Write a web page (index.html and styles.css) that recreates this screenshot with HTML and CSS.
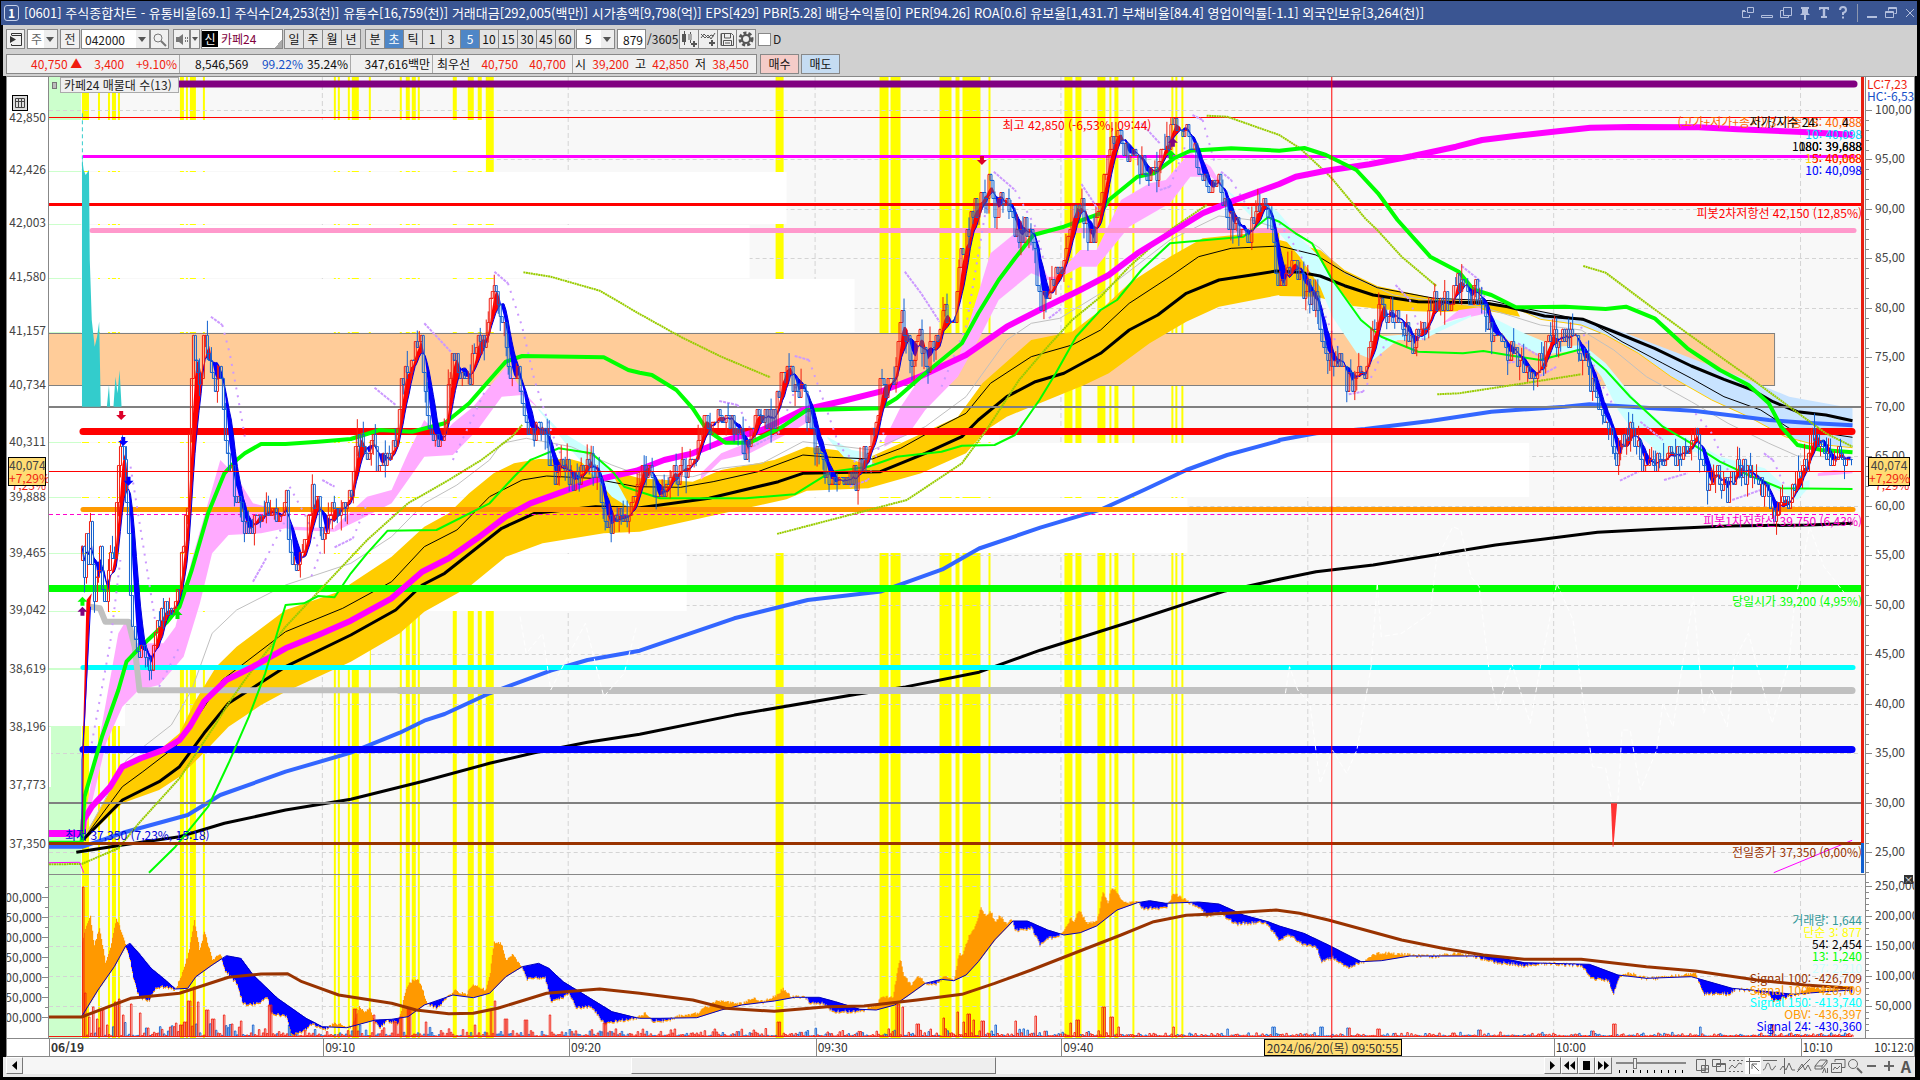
FILE: index.html
```html
<!DOCTYPE html>
<html lang="ko">
<head>
<meta charset="utf-8">
<title>주식종합차트</title>
<link rel="stylesheet" href="styles.css">
</head>
<body>
<div class="window">
  <header class="titlebar">
    <span class="titlebar-no">1</span>
    <h1>[0601] 주식종합차트 - 유통비율[69.1] 주식수[24,253(천)] 유통수[16,759(천)] 거래대금[292,005(백만)] 시가총액[9,798(억)] EPS[429] PBR[5.28] 배당수익률[0] PER[94.26] ROA[0.6] 유보율[1,431.7] 부채비율[84.4] 영업이익률[-1.1] 외국인보유[3,264(천)]</h1>
    <nav class="title-icons">
      <button aria-label="분리"><svg width="14" height="14"><path d="M6.500 1.500h6v5h-6zM4 4.500H1.500v7h7V9M1 5.500h4" /></svg></button>
      <button aria-label="숨기기"><svg width="14" height="14"><path d="M1.500 9.500h11v2h-11z"/></svg></button>
      <button aria-label="복사"><svg width="14" height="14"><path d="M4.500 1.500h8v8h-8zM4 4.500H1.500v7h8V10"/></svg></button>
      <button aria-label="고정"><svg width="14" height="14"><path class="fill" d="M3 1h8v2H10v4l2 2H2l2-2V3H3zM6 9h2v5H6z"/></svg></button>
      <button aria-label="글꼴"><svg width="14" height="14"><path class="fill" d="M2 1h10v3h-1.500V3H8.200v7H10v2H4v-2h1.800V3H3.500v1H2z"/></svg></button>
      <button aria-label="도움말"><svg width="14" height="14"><path class="bold" d="M4 4q0-3 3-3t3 3q0 2-3 3v2M7 10.500v2"/></svg></button>
      <i class="title-sep"></i>
      <button aria-label="최소화"><svg width="14" height="14"><path class="bold" d="M2 11h10"/></svg></button>
      <button aria-label="이전 크기"><svg width="14" height="14"><path d="M4.500 1.500h8v6h-2M4.500 2.500h8M4.500 1.500v3M1.500 5.500h8v6h-8zM1.500 6.500h8"/></svg></button>
      <button aria-label="닫기"><svg width="14" height="14"><path d="M3 3l8 8M11 3l-8 8"/></svg></button>
    </nav>
  </header>

  <form class="toolbar">
    <button type="button" class="tool" aria-label="목록"><svg width="15" height="15"><path d="M3.500 3V1.500h10v12h-10V12M3.500 3.500h10"/><path class="fill" d="M2 4l6 3.500L2 11z"/></svg></button>
    <span class="combo market"><select aria-label="시장"><option>주</option></select></span>
    <button type="button" class="tool prev">전</button>
    <span class="combo code"><input aria-label="종목코드" value="042000"></span>
    <button type="button" class="tool search" aria-label="검색"><svg width="15" height="15"><circle cx="6" cy="6" r="4"/><path class="bold" d="M9 9l5 5"/></svg></button>
    <button type="button" class="tool sound" aria-label="소리"><svg width="14" height="13"><path class="fill" d="M1 4h3l4-3v11L4 9H1z"/><path d="M10.500 4v2M10.500 7v2M12.500 4v2M12.500 7v2"/></svg></button>
    <button type="button" class="tool drop" aria-label="소리 옵션"></button>
    <output class="stock"><b>신</b>카페24</output>
    <span class="group period"><button type="button">일</button><button type="button">주</button><button type="button">월</button><button type="button">년</button></span>
    <span class="group unit"><button type="button">분</button><button type="button" class="on">초</button><button type="button">틱</button></span>
    <span class="group count"><button type="button">1</button><button type="button">3</button><button type="button" class="on">5</button><button type="button">10</button><button type="button">15</button><button type="button">30</button><button type="button">45</button><button type="button">60</button></span>
    <span class="combo interval"><select aria-label="주기"><option>5</option></select></span>
    <input class="bars" aria-label="봉 개수" value="879">
    <span class="total">/3605</span>
    <span class="group icons">
      <button type="button" aria-label="봉 추가"><svg width="17" height="17"><path class="fill" d="M1 3h4v8H1z"/><path d="M3.500 0v14M9.500 1v11"/><path class="soft" d="M7 3h4v6H7z"/><path class="bold" d="M13 10v6M10 13h6"/></svg></button>
      <button type="button" aria-label="지표 추가"><svg width="17" height="17"><path d="M1 7l3-4 4 4 3-3 3 1M1 3l4 4 3-3 3 4 4-6"/><path class="bold" d="M12 9v6M9 12h6"/></svg></button>
      <button type="button" aria-label="저장"><svg width="17" height="17"><path d="M2.500 2.500h10l2 2v10h-12zM5.500 3v4h6V3M4.500 14V9.500h8V14M6 12h5M2 2.500v12"/></svg></button>
      <button type="button" aria-label="설정"><svg width="17" height="17"><circle class="gear" cx="8" cy="8" r="6"/><circle class="bold" cx="8" cy="8" r="4"/></svg></button>
    </span>
    <label class="check"><input type="checkbox">D</label>
  </form>

  <section class="quote">
    <div class="quote-box">
      <span class="cell c1 up"><b>40,750 ▲</b><b>3,400</b><b>+9.10%</b></span>
      <span class="cell c2"><b class="qty">8,546,569</b><b class="down">99.22%</b><b>35.24%</b></span>
      <span class="cell c3">347,616백만</span>
      <span class="cell c4">최우선<b class="up">40,750</b><b class="up">40,700</b></span>
      <span class="cell c5">시<b class="up">39,200</b>고<b class="up">42,850</b>저<b class="up">38,450</b></span>
    </div>
    <button class="buy">매수</button>
    <button class="sell">매도</button>
  </section>

  <main class="chart">
    <div class="axis axis-left" id="left">
      <button class="axis-grid" aria-label="표"><svg width="14" height="14"><path d="M2.500 2.500h9v9h-9zM2.500 5.500h9M5.500 2.500v9M8.500 2.500v9"/></svg></button>
    </div>
    <div class="plot" id="plot">
      <svg id="canvas" viewBox="49 77 1818 961" preserveAspectRatio="none"></svg>
      <i class="legend-mark"></i>
      <span class="legend">카페24 매물대 수(13)</span>
    </div>
    <div class="axis axis-right" id="right">
      <span class="lc">LC:7,23</span>
      <span class="hc">HC:-6,53</span>
      <button class="axis-close" aria-label="닫기">×</button>
    </div>
    <div class="corner"></div>
    <div class="times" id="times"><b>06/19</b></div>
    <div class="corner clock">10:12:0</div>
  </main>

  <footer class="bottom">
    <div class="scroll">
      <button class="scroll-left" aria-label="왼쪽"><svg width="7" height="9"><path d="M6 0v9L1 4.500z"/></svg></button>
      <div class="scroll-track"><div class="scroll-thumb"></div></div>
    </div>
    <div class="play">
      <button aria-label="재생"><svg width="13" height="11"><path d="M4 1v9l5-4.500z"/></svg></button>
      <button aria-label="뒤로"><svg width="13" height="11"><path d="M6 1v9L1 5.500zM12 1v9L7 5.500z"/></svg></button>
      <button aria-label="정지"><svg width="13" height="11"><path d="M3 1h7v9H3z"/></svg></button>
      <button aria-label="앞으로"><svg width="13" height="11"><path d="M1 1v9l5-4.500zM7 1v9l5-4.500z"/></svg></button>
    </div>
    <label class="speed"><input type="range" min="0" max="100" value="25" aria-label="속도"></label>
    <div class="draw">
      <button aria-label="창 추가"><svg width="16" height="16"><path d="M2.500 1.500h9v11h-9zM7.500 7.500h7v7h-7zM11 7v8M7 11h8"/></svg></button>
      <button aria-label="창 겹침"><svg width="16" height="16"><path d="M1.500 1.500h8v7h-8zM5.500 5.500h9v8h-9zM5 6.500h10"/></svg></button>
      <button aria-label="영역"><svg width="16" height="16"><path d="M1 11l3-4 3 3 4-5 3 1"/><path class="dots" d="M1 2.500h14M1 13.500h14"/></svg></button>
      <button aria-label="십자선" class="on"><svg width="16" height="16"><path d="M1 3.500h14M4.500 0v16M7 6v5M7 6h5M7 6l7 7"/></svg></button>
      <button aria-label="수평선"><svg width="16" height="16"><path d="M1 2.500h14M1 12c3 0 3-7 5-7s2 7 4 7 2-4 4-4"/></svg></button>
      <button aria-label="수직선"><svg width="16" height="16"><path d="M5.500 0v16M1 12l3-4 3 4 3-7 3 7h3"/></svg></button>
      <button aria-label="추세선"><svg width="16" height="16"><path d="M1 14L14 1M2 12l4-6 3 6 3-5 3 6"/></svg></button>
      <button aria-label="모두 지우기"><svg width="16" height="16"><path d="M2 8l5-6h7v3l-5 6H2zM2 8h7v3M9 8l5-6M9.500 15l2-5 1.500 5M14.500 10v5"/></svg></button>
      <button aria-label="차트 복사"><svg width="16" height="16"><path d="M5 4V1.500h10v8h-3M1.500 5.500h10v9h-10zM3 12l2-3 2 2 3-3"/></svg></button>
      <button aria-label="확대 보기"><svg width="16" height="16"><circle cx="6" cy="6" r="4.500"/><path class="bold" d="M10 10l5 5"/></svg></button>
      <button aria-label="축소"><svg width="16" height="16"><path class="bold" d="M3 8h9"/></svg></button>
      <button aria-label="확대"><svg width="16" height="16"><path class="bold" d="M3 8h10M8 3v10"/></svg></button>
      <button aria-label="자동" class="auto">A</button>
    </div>
  </footer>
</div>
<script src="chart.js"></script>
</body>
</html>
```
FILE: styles.css
```css
* { box-sizing: border-box; }
body {
  margin: 0;
  background: #000;
  font: 12px/16px "Noto Sans CJK KR", sans-serif;
  color: #222;
}
button, input, select { font: inherit; color: inherit; margin: 0; padding: 0; border: 0; background: none; border-radius: 0; }
b { font-weight: normal; }
svg { display: block; fill: none; stroke: currentColor; }
svg .fill { fill: currentColor; stroke: none; }
svg .soft { fill: #aaa; stroke: none; }
svg .bold { stroke-width: 2; }
svg .gear { stroke-width: 3; stroke-dasharray: 3 2; }
.window { display: flex; flex-direction: column; min-height: 100vh; padding: 1px 3px 3px 1px; }

.titlebar { display: flex; align-items: center; height: 24px; padding: 0 0 0 3px; background: #3a5592; color: #fff; }
.titlebar-no { width: 15px; height: 16px; margin-right: 5px; border: 1px solid #c8d2ea; border-radius: 3px; text-align: center; line-height: 14px; font-weight: bold; }
.titlebar h1 { flex: 1; margin: 0; font-size: 13px; line-height: 22px; font-weight: normal; white-space: nowrap; }
.title-icons { display: flex; align-items: center; gap: 5px; color: #b4c0de; }
.title-sep { width: 1px; height: 18px; margin: 0 2px; background: #8d97ae; }

.toolbar { display: flex; align-items: center; height: 27px; margin-left: 2px; padding: 1px 3px 0; background: #d0d0d0; white-space: nowrap; }
.tool, .group button { display: flex; align-items: center; justify-content: center; height: 20px; border: 1px solid #888; background: #f0f0f0; color: #333; }
.tool { width: 19px; flex: none; }
.prev { width: 20px; }
.search { color: #777; }
.sound { width: 17px; margin-left: 4px; color: #777; }
.drop { width: 10px; }
.drop::after, .combo::after { content: ""; border: 4px solid transparent; border-top: 5px solid #555; border-bottom: 0; }
.drop::after { border-width: 4px 3px 0; }
.combo { display: flex; align-items: center; height: 20px; flex: none; padding-right: 3px; border: 1px solid #888; background: linear-gradient(#eee, #eee) right / 13px 100% no-repeat #fff; }
.combo select, .combo input { flex: 1; min-width: 0; height: 18px; padding-left: 3px; appearance: none; }
.market { width: 31px; margin: 0 2px; color: #666; }
.code { width: 69px; margin-left: 1px; }
.stock { display: flex; align-items: center; width: 82px; height: 20px; margin: 0 1px; border: 1px solid #888; background: linear-gradient(135deg, transparent 50%, #aaa 50%) right bottom / 8px 8px no-repeat #fff; color: #80003c; }
.stock b { width: 16px; margin-right: 3px; background: #000; color: #fff; text-align: center; }
.group { display: flex; flex: none; }
.group button { width: 20px; margin-right: -1px; background: #e4e4e4; color: #111; }
.group .on { background: #4f86c6; color: #fff; }
.unit { margin-left: 5px; }
.interval { width: 39px; margin-left: 2px; color: #111; }
.interval select { padding-left: 8px; }
.bars { width: 29px; height: 20px; margin-left: 2px; padding-right: 2px; border: 1px solid #888; background: #fff; text-align: right; color: #111; }
.total { width: 33px; padding-left: 1px; }
.icons button { color: #555; background: #eee; }
.check { display: flex; align-items: center; gap: 2px; margin-left: 3px; }
.check input { width: 13px; height: 13px; appearance: none; border: 1px solid #888; background: #fff; }

.quote { display: flex; align-items: center; gap: 2px; height: 24px; margin-left: 2px; padding: 0 3px 1px; background: #d0d0d0; color: #111; white-space: nowrap; }
.quote-box { display: flex; width: 751px; height: 20px; border: 1px solid #888; background: #f0f0f0; }
.cell { display: flex; align-items: center; justify-content: space-between; padding: 0 2px 0 4px; border-left: 1px solid #aaa; }
.c1 { width: 172px; padding-left: 24px; border: 0; }
.c2 { width: 171px; padding-left: 15px; gap: 4px; }
.qty { margin-right: auto; }
.c3 { width: 82px; justify-content: flex-end; }
.c4 { width: 140px; padding-right: 6px; }
.c5 { flex: 1; padding: 0 7px 0 2px; }
.up { color: #f01e10; }
.down { color: #1450c8; }
.quote button { width: 39px; height: 20px; border: 1px solid #888; }
.quote .buy { margin-left: 1px; background: #f5ccc8; }
.quote .sell { background: #c5dcf2; }

.chart { flex: 1; display: grid; grid-template-columns: 43px minmax(0, 1fr) 48px; grid-template-rows: minmax(0, 1fr) 18px; margin: 0 2px 0 5px; border: 1px solid #888; border-width: 1px 1px 1px 0; background: #fff; }
.axis { position: relative; overflow: hidden; color: #444; }
.axis-left { border-right: 1px solid #888; border-left: 1px solid #888; }
.axis span, .plot span, .times span, .times b { position: absolute; white-space: nowrap; line-height: 16px; }
.axis .label { transform: translateY(-50%); }
.axis-left .label { right: 2px; }
.axis-left .lower { right: 6px; }
.axis-right .label { left: 9px; }
.axis .tick { height: 1px; width: 6px; background: #888; }
.axis-right .tick { left: 0; }
.axis-left .tick { right: 0; }
.axis .minor { width: 3px; }
.axis .lc { top: -1px; left: 1px; color: #f01e10; }
.axis .hc { top: 11px; left: 1px; color: #1450c8; }
.axis-close { position: absolute; top: 83%; right: 1px; width: 9px; height: 9px; background: #333; color: #fff; font-size: 9px; line-height: 9px; }
.axis-grid { position: absolute; top: 18px; left: 5px; border: 1px solid #000; background: #ddd; }
.axis .price-tag { z-index: 1; width: 38px; height: 29px; border: 1px solid #000; background: #ffdc73; text-align: center; line-height: 13px; }
.axis-left .price-tag { left: 1px; }
.axis-right .price-tag { left: 2px; width: 42px; }
.price-tag em { display: block; font-style: normal; color: #f01e10; }
.plot { position: relative; overflow: hidden; background: #f8f8f8; }
.plot svg { position: absolute; width: 100%; height: 100%; stroke: none; }
.plot .mark { transform: translateY(-50%); }
.plot .edge { right: 4px; }
.plot .legend { top: 0; left: 11px; width: 119px; height: 16px; padding: 0 3px; border: 1px solid #aaa; background: #f0f0f0; line-height: 14px; }
.legend-mark { position: absolute; top: 5px; left: 3px; width: 5px; height: 7px; border: 1px solid #777; background: #bbb; }
.corner, .times { border-top: 1px solid #888; }
.corner { border-left: 1px solid #888; }
.clock { padding-left: 8px; border-left: 0; color: #333; white-space: nowrap; }
.times { position: relative; border-left: 1px solid #888; color: #333; }
.times b { left: 1px; font-weight: bold; }
.times span { height: 17px; padding-left: 1px; border-left: 1px solid #888; }
.times .cursor-time { padding: 0 2px; border: 1px solid #000; background: #ffdc73; }

.bottom { display: flex; height: 20px; margin: 0 2px 0 2px; padding: 0 1px 3px 3px; background: #e8e8e8; }
.bottom button { display: flex; align-items: center; justify-content: center; height: 17px; }
.scroll { display: flex; flex: 1; }
.scroll-left, .play button { width: 17px; border: 1px solid #777; border-top-color: #fff; border-left-color: #fff; background: #eee; }
.bottom .scroll-left svg, .play svg { fill: #000; stroke: none; }
.scroll-track { flex: 1; background: #f6f6f6; }
.scroll-thumb { width: 24%; height: 17px; margin-left: 40%; border: 1px solid #777; border-top-color: #fff; border-left-color: #fff; background: #eee; }
.play { display: flex; }
.speed { width: 78px; padding: 0 4px; background: repeating-linear-gradient(90deg, #000 0 1px, transparent 1px 7px) 7px 13px / 66px 3px no-repeat; }
.speed input { display: block; width: 70px; height: 12px; appearance: none; background: linear-gradient(#888, #888) center / 100% 2px no-repeat; }
.speed input::-webkit-slider-thumb { appearance: none; width: 4px; height: 11px; border: 1px solid #777; background: #eee; }
.draw { display: flex; gap: 1px; padding-left: 4px; color: #666; }
.draw button { width: 16px; }
.draw .on { background: #fff; }
.draw .dots { stroke-dasharray: 2 2; }
.draw .auto { font-size: 16px; font-weight: bold; color: #555; }
```
FILE: chart.js
```js
const svg = document.getElementById('canvas');
const NS = 'http://www.w3.org/2000/svg';

// Every series is stored in sections; a section has an origin and a scale of its own.
const sections = {
  A: [0, 60, 2.45, 3], B: [0, 460, 2.45, 3], C: [640, 80, 2.45, 3], D: [1280, 220, 2.45, 3],
  E: [1280, 660, 2.45, 3], F: [0, 860, 2.45, 3], G: [640, 840, 2.45, 3],
  H: [1240, 0, 2.306, 3], P: [0, 0, 0.8167, 0.8167], S: [0, 0, 1, 1]
};
// "A 1,2 3,4 B 5,6" -> [[x, y], ...]
function points(text) {
  let s = sections.S;
  const out = [];
  for (const t of text.trim().split(/\s+/)) {
    if (sections[t]) { s = sections[t]; continue; }
    const [x, y] = t.split(',').map(Number);
    out.push([s[0] + x / s[2], s[1] + y / s[3]]);
  }
  return out;
}
function el(name, attrs) {
  const e = document.createElementNS(NS, name);
  for (const k in attrs) e.setAttribute(k, attrs[k]);
  svg.appendChild(e);
  return e;
}
const d = pts => 'M' + pts.map(p => p[0].toFixed(1) + ' ' + p[1].toFixed(1)).join('L');
const line = (text, color, w, dash) =>
  el('path', { d: text.split('|').map(t => d(points(t))).join(''), fill: 'none', stroke: color, 'stroke-width': w, 'stroke-dasharray': dash || 'none', 'stroke-linejoin': 'round' });
const area = (upper, lower, color) =>
  el('path', { d: d(points(upper).concat(points(lower).reverse())) + 'Z', fill: color });
const rect = (x, y, x2, y2, fill, stroke) =>
  el('rect', { x, y, width: x2 - x, height: y2 - y, fill, stroke: stroke || 'none' });
const level = (y, x1, x2, color, w, cap) =>
  el('path', { d: `M${x1} ${y}H${x2}`, stroke: color, 'stroke-width': w, 'stroke-linecap': cap || 'butt' });

/* background zones */
rect(49, 77, 81, 1038, '#ccffcc');
[[82,89],[98,100],[108,110],[112,116],[118,120],[180,184],[186,188],[190,196],[203,205],[334,336],[338,340],[348,350],[352,359],[369,371],[400,402],[406,410],[412,416],[418,420],[453,457],[468,474],[478,482],[486,494],[776,784],[880,889],[891,901],[940,952],[956,960],[963,981],[989,991],[1065,1073],[1076,1082],[1098,1106],[1110,1112],[1115,1119],[1133,1135],[1172,1174],[1176,1178],[1182,1184]]
  .forEach(([a, b]) => rect(a, 77, b, 1038, '#ffff00'));
const gridX = [322.5, 568.5, 815.5, 1061.5, 1308.5, 1554.5, 1801.5];
const gridMain = [110, 159, 209, 258, 308, 357, 407, 456, 506, 555, 605, 654, 704, 753, 803, 852];
const gridLow = [886, 916, 946, 976, 1006];
gridX.forEach(x => el('path', { d: `M${x} 77V1038`, stroke: '#d4d4d4', 'stroke-dasharray': '5 3' }));
gridMain.concat(gridLow).forEach(y => el('path', { d: `M49 ${y}.5H1863`, stroke: '#d4d4d4', 'stroke-dasharray': '4 3' }));
/* volume-by-price rows */
[[120,171,486],[172,224,787],[225,278,750],[279,332,855],[386,442,1000],[443,497,1530],[498,553,1188],[554,611,687],[612,668,370],[670,726,125]]
  .forEach(([a, b, x]) => rect(49, a, x, b, '#fff'));
rect(49, 727, 51, 787, '#fff');
rect(48.5, 333.5, 1775.5, 385.5, '#ffcc99', '#808080');

/* faint dashed oscillator */
const oscillator = 'B 1275,470 1290,580 1330,520 1350,690 1400,570 1435,490 1480,710 1530,640 1560,500 | E 15,100 25,20 45,90 75,130 100,370 130,270 165,340 190,270 225,20 D 240,1090 250,1250 300,1240 370,1180 385,1020 425,920 445,930 470,1070 490,1100 E 515,40 535,150 570,10 615,190 640,20 D 680,1090 720,1200 E 740,80 768,320 800,325 815,425 830,420 840,210 860,210 885,390 925,270 940,130 965,200 990,0 D 1015,1130 E 1040,160 1060,90 1098,200 1115,0 D 1150,1240 E 1208,190 1250,0 D 1262,1160 1300,920 1335,1040 1405,1150';

/* bands */
area('B 203,1135 300,930 400,860 440,820 480,720 530,620 580,560 700,450 830,395 960,290 1040,200 1100,160 1150,100 1210,40 A 1260,1210 1320,1197 1400,1198 C 0,1195 130,1205 200,1170 330,1140 410,1100 480,1110 570,1128 640,1090 780,1010 840,910 960,780 1060,755 1130,690 1200,610 1300,530 1380,475 1500,460 1568,458 D 0,60 100,90 160,150 240,198 400,240 500,243 580,265',
     'B 203,1145 300,1030 390,990 440,950 490,890 560,800 640,735 700,695 860,605 980,520 1040,455 1150,380 1240,290 1330,250 1480,220 1568,215 C 360,1258 410,1232 560,1225 690,1180 800,1120 850,1050 900,1010 1000,960 1090,915 1150,880 1250,790 1340,725 1420,680 1568,645 D 0,228 90,230 180,258 290,272 400,276 500,270 590,290', '#ffcc00');
area('D 580,262 745,298 850,340 1000,410 1150,480 1250,530 1405,565', 'D 580,265 640,298 730,315 800,345 880,400 960,470 1060,540 1150,590 1240,650 1300,670 1405,683', '#c8e3ff');
line('D 580,265 640,298 740,315 800,345 880,400 960,470 1060,540 1150,590 1240,650 1300,670 1405,683', '#ffcc00', 1);
[['B 203,1100 240,860 290,520 310,480 330,550 400,550 430,500 470,300 540,0 580,50 620,130 700,155 720,200 820,205', 'B 203,1140 260,850 300,740 340,690 390,675 450,590 490,430 520,280 560,225 640,220 700,205 720,210 820,215'],
 ['B 820,200 900,110 960,90 A 1000,1180 1040,1080 1080,1130 1110,1090 1160,1040 1240,920 1280,990 1320,1045', 'B 820,215 880,180 960,130 1000,60 A 1040,1190 1110,1185 1170,1110 1230,1010 1280,1005 1320,1045'],
 ['C 150,1180 200,1120 270,1085 380,1010 400,1000 420,1015', 'C 150,1200 200,1140 270,1120 380,1050 420,1020'],
 ['C 600,1080 640,980 690,890 780,840 810,720 860,520 920,460 960,480 1000,590 1020,590 1080,510 1120,510 1180,360 1250,310 1290,300 1350,215 1400,260 1430,320', 'C 600,1100 660,1060 700,990 780,890 830,780 880,660 960,580 1000,600 1020,600 1080,560 1120,560 1200,440 1300,370 1350,290 1400,290 1430,320'],
 ['D 400,310 440,270 490,262 510,280', 'D 400,310 440,295 470,290 510,280'],
 ['D 1320,760 1360,750 1405,755', 'D 1320,768 1360,765 1405,760']
].forEach(([u, l]) => area(u, l, '#ffaaff'));
[['A 1320,1045 1370,1110 1450,1170 1500,1240 B 1545,140', 'A 1320,1050 1400,1170 1450,1240 B 1500,110 1545,145'],
 ['C 460,1070 520,1110 570,1120', 'C 460,1075 500,1130 570,1160'],
 ['C 1440,330 1490,380 1540,370 1568,400 D 40,40 90,100 130,180 200,290 240,350 290,345 350,345 410,310 470,285', 'C 1440,335 1500,410 1568,460 D 50,110 100,200 130,290 190,400 230,420 290,360 350,360 400,330 470,290'],
 ['D 510,285 600,340 680,380 745,375 800,430 880,550 950,620 1010,660 1080,710 1190,745 1240,800 1300,780', 'D 510,285 560,360 640,405 740,390 790,470 830,570 860,620 940,710 1020,695 1090,780 1150,770 1220,810 1270,840 1300,800']
].forEach(([u, l]) => area(u, l, '#ccffff'));

/* slow averages */
line('B 203,1140 310,900 420,795 470,690 520,520 580,450 700,375 860,310 960,230 1040,130 1120,75 1200,0 A 1230,1150 1290,1135 1400,1160 1500,1215 C 0,1185 130,1190 200,1165 300,1150 400,1085 570,1110 700,1040 800,950 900,780 960,730 1030,715 1130,640 1300,480 1420,408 1500,420 D 50,45 100,85 160,160 280,225 500,262 640,315 740,330 820,390 900,470 1010,545 1100,610 1200,670 1270,708 1405,712', '#c0c0c0', 1);
line('B 187,1177 300,1155 440,1130 550,1090 700,1050 860,1018 1040,963 1200,910 1310,878 1440,847 1568,823 P 600,584 700,567 740,561 800,549 850,531 920,509 1000,483 D 0,1078 90,1055 230,1035 380,1005 530,975 650,957 780,937 920,928 1100,918 1300,915 1405,910', '#000', 3);
line('B 120,1160 203,1160 310,1115 460,1065 540,1005 700,935 860,878 980,818 1040,782 1090,762 1200,700 1350,632 1440,600 1568,572 P 600,505 660,490 720,483 770,465 800,448 850,431 900,416 C 1240,1228 1340,1170 1440,1125 1568,1082 D 0,660 90,640 210,627 370,603 520,575 700,560 760,553 860,560 1020,573 1200,600 1290,608 1405,616', '#3366ff', 4);
line('B 203,1140 300,1020 390,965 440,920 500,820 560,730 700,620 860,525 970,450 1035,375 1090,340 1230,205 1310,160 1460,140 1560,145 C 170,1255 340,1205 400,1180 590,1175 700,1120 790,1070 830,1020 900,950 970,905 1040,880 1130,820 1200,750 1270,705 1340,640 1420,600 1500,585 1560,573 D 50,157 100,168 160,197 230,225 340,245 500,248 560,260 650,288 745,298 840,345 920,385 1010,438 1090,478 1160,510 1210,545 1270,575 1340,585 1405,602', '#000', 3);
line('B 203,1140 300,980 350,935 430,860 490,760 545,660 700,515 840,445 960,365 1040,260 1120,210 1200,110 1280,60 1340,48 1450,55 1560,80 C 100,1222 180,1205 290,1175 400,1125 470,1132 570,1137 640,1105 720,1050 800,1000 860,910 960,830 1060,795 1130,750 1200,670 1300,590 1370,530 1450,505 1568,498 D 90,105 160,157 240,203 380,235 520,242 590,262 760,304 840,365 940,430 1010,475 1090,530 1180,570 1250,625 1330,638 1405,652', '#000', 1);

/* price levels */
level(84, 175, 1855, '#800080', 7, 'round');
level(117.5, 49, 1863, '#f00', 1);
level(156.5, 83, 1857, '#ff00ff', 3);
level(204.5, 49, 1863, '#f00', 3);
level(230.5, 92, 1855, '#ff99cc', 5, 'round');
level(407, 49, 1863, '#808080', 2);
level(431.5, 83, 1853, '#f00', 7, 'round');
level(509.5, 83, 1854, '#ff9900', 5, 'round');
level(588.5, 49, 1863, '#00ff00', 7);
level(667.5, 83, 1854, '#00ffff', 5, 'round');
line('B 220,440 245,445 258,485 315,485 330,560 342,691 1000,691', '#c0c0c0', 6);
level(690.5, 400, 1853, '#c0c0c0', 7, 'round');
level(749.5, 83, 1853, '#0000ff', 7, 'round');
level(803, 49, 1863, '#808080', 2);
el('path', { d: 'M49 514.5H1863', stroke: '#ff00cc', 'stroke-dasharray': '4 3' });
line(oscillator, '#fff', 1, '5 3');

/* left histogram */
area('A 201,290 205,330 210,345 218,330 220,600 225,780 232,860 238,830 243,785 247,1040', 'A 201,1040 247,1040', '#33cccc');
area('A 262,1040 267,975 270,1040 278,1040 283,950 288,1000 293,930 298,1040', 'A 262,1040 298,1040', '#33cccc');
line('A 202,160 202,330', '#33cccc', 1, '4 3');

/* parabolic dots */
line('B 120,1213 200,1212 290,1165 340,1090 440,955 530,790 560,730 600,660 700,500 800,370 900,240 1000,130 1100,60 1180,0 A 1255,1130 1280,1095 | A 1283,637 1350,650 1470,692 1568,762 C 100,770 200,830 320,892 | P 635,436 C 655,1260 790,1150 850,1050 930,900 1000,800 1060,720 1130,650 1200,560 1300,450 1390,375 | C 1390,107 1440,110 1568,165 H 140,445 210,530 290,655 D 240,30 300,110 385,198 | D 745,138 800,158 900,250 1000,340 1150,470 1250,560 1340,640 1405,680 | D 387,523 440,520 600,490 740,463', '#99cc00', 2, '2 .5');
line('A 517,770 545,795 | A 918,983 970,1035 | A 1040,790 1105,875 | A 1212,635 1245,670 | B 620,365 650,300 | B 820,262 865,235 | B 790,60 820,80 | C 650,575 690,640 735,725 | C 195,963 240,975 | C 380,828 415,840 | C 868,275 920,330 | C 1083,312 1130,400 | C 1230,130 1275,190 | C 1355,105 1380,120 | C 1425,275 1450,300 | C 1275,330 1300,320 | C 1003,715 1030,690 | C 515,1220 560,1200 | C 260,1110 340,1060 | D 170,523 205,515 | D 285,195 320,240 | D 447,138 490,180 | D 560,428 580,425 | D 585,370 640,410 | D 638,468 680,440 | D 835,782 880,755 | D 885,605 940,660 | D 943,780 1000,760 | D 1110,840 1180,810 | D 1188,700 1210,720', '#cc99ff', 2, '3 1');
line('A 545,795 563,880 583,1010 600,1130 | B 225,850 270,550 295,300 | B 320,20 350,250 380,480 | B 390,680 440,560 | B 650,300 700,180 | B 710,80 750,170 785,280 760,360 | B 865,235 900,130 | A 1245,670 1280,800 1310,960 1350,1110 1390,1230 | A 1110,1200 1190,990 | C 240,975 290,1090 | C 415,840 450,960 490,1100 540,1160 | C 920,330 970,440 990,540 | C 740,920 800,740 850,380 | C 1380,120 1410,250 | C 1450,300 1500,400 | C 1300,320 1340,190 | C 1030,690 1060,590 | C 560,1200 600,1050 | C 340,1060 390,900 | D 0,10 50,100 130,340 170,470 | D 205,515 235,450 265,350 | D 320,240 355,370 | D 490,180 515,280 540,360 | D 740,320 780,470 820,560 | D 1020,580 1060,640 1110,780 | D 1210,720 1240,800', '#cc99ff', 2, '2 6');

/* fast averages */
level(833.5, 49, 82, '#ff00ff', 7);
line('B 203,1120 205,1080 225,1040 270,980 300,920 345,895 400,870 440,840 465,800 500,725 555,660 620,620 700,565 780,525 860,482 960,415 1035,335 1100,295 1170,235 1240,170 1300,130 1380,95 1460,60 1560,32 C 60,1140 130,1120 200,1085 300,1050 400,990 500,962 590,935 690,888 800,825 900,740 980,690 1080,630 1150,585 1220,520 1300,460 1380,400 1460,360 1568,312 H 130,530 200,512 300,493 400,468 500,440 560,420 640,407 740,393 810,383 900,381 1060,382 1150,388 1300,396 1415,404', '#ff00ff', 6);
line('B 120,1148 200,1148 207,1010 250,830 290,690 310,605 345,560 410,485 440,440 470,330 510,160 550,40 580,0 A 600,1180 640,1152 700,1152 780,1145 860,1137 930,1110 1010,1115 1090,1090 1150,1030 1200,960 1240,905 1280,888 1480,892 1540,930 1568,938 C 30,885 90,930 130,985 165,1050 210,1088 270,1088 350,1040 410,990 590,985 630,955 690,890 790,790 830,700 880,600 920,535 965,465 1040,440 1130,400 1150,360 1220,290 1260,280 1310,235 1350,212 1450,205 1568,212 H 150,444 200,465 270,510 320,580 365,660 D 370,110 440,155 475,208 520,225 580,262 700,260 800,267 850,260 920,295 1000,385 1080,450 1150,495 1200,550 1230,620 1270,675 1330,690 1405,697', '#00ff00', 4);
line('B 365,1238 430,1160 510,1040 560,910 610,770 650,640 700,435 745,430 780,408 820,412 860,340 900,280 950,212 1070,210 1200,130 1260,50 1300,0 A 1310,1195 1370,1165 1450,1180 1500,1232 B 1530,80 1568,95 C 50,1255 260,1255 380,1243 470,1175 560,1160 630,1130 740,1115 790,1097 870,1095 920,1065 980,960 1020,880 1070,770 1130,690 1170,660 1230,570 1300,490 1480,470 1540,412 1568,425 D 40,40 80,70 130,180 200,300 250,350 340,395 450,400 500,393 570,407 640,420 740,388 800,450 860,530 940,620 1010,670 1080,725 1150,765 1230,805 1405,807', '#00ff00', 2);
line('B 120,1208 195,1207 205,1238 | E 1212,638 1404,541', '#ff00ff', 1);
level(843.5, 49, 1863, '#993300', 3);
area('B 200,1120 203,850 212,420 225,400', 'B 203,1120 206,850 222,420 225,400', '#f00');
line('B 201,1140 201,900 207,780 222,440', '#0000ff', 1);

/* candles and the ribbon of two short averages */
const price = points('B 201,300 205,400 210,200 214,330 220,180 228,400 238,370 245,290 252,400 260,440 268,300 280,280 288,60 A 294,1130 302,1180 305,1230 B 312,130 320,420 335,600 350,580 368,620 385,500 405,440 425,480 435,400 450,200 460,80 A 466,1050 474,800 479,870 490,1000 500,800 510,880 525,980 543,930 550,1080 B 560,10 575,90 600,200 640,180 660,140 680,180 700,110 715,340 745,250 765,100 780,150 795,220 820,140 850,140 864,60 A 870,1150 880,1130 895,1190 912,1140 930,1240 950,1170 975,1120 985,950 1000,960 1015,850 1030,830 1050,1080 1075,1150 1090,1100 1100,950 1115,880 1130,950 1150,950 1165,850 1190,850 1205,700 1212,680 1225,740 1240,850 1250,980 1268,930 1285,1050 1295,1150 1315,1100 1335,1120 1350,1220 B 1360,70 1380,20 1415,80 1440,0 1460,40 1485,190 1510,170 1535,180 1550,120 C 0,1190 20,1170 35,1230 60,1240 90,1170 130,1160 150,1050 165,1010 180,1060 195,980 215,1020 240,1040 260,1110 275,1010 330,1010 345,900 355,850 375,910 400,940 420,1060 445,1130 470,1200 500,1180 530,1190 550,1120 575,1060 590,900 610,920 625,910 635,750 645,720 665,850 680,740 705,840 725,780 745,700 770,720 785,520 810,430 835,350 860,300 870,380 890,350 905,370 925,470 945,440 965,480 980,660 1000,620 1025,570 1045,490 1060,400 1085,370 1100,500 1120,430 1130,350 1145,220 1160,180 1175,140 1195,240 1215,210 1235,270 1260,290 1280,210 1300,170 1315,135 1340,135 1360,200 1375,300 1400,330 1420,300 1440,400 1460,440 1480,480 1500,440 1510,370 1535,360 1545,450 1560,580 D 0,160 10,190 25,130 40,150 60,200 90,240 105,400 125,430 140,400 165,480 190,490 210,430 235,340 245,240 265,280 290,280 320,370 350,340 375,260 390,240 420,235 435,180 448,170 460,240 480,215 510,310 540,390 570,390 600,430 625,450 650,390 685,330 710,360 735,370 755,450 775,560 800,590 815,640 825,750 845,650 865,640 890,720 920,730 950,690 970,720 995,690 1018,620 1030,700 1045,780 1075,770 1100,820 1118,740 1150,760 1180,790 1200,850 1212,900 1225,850 1245,850 1265,790 1290,740 1305,650 1330,680 1350,730 1380,710 1402,760');
let seed = 42;
const rnd = () => (seed = (seed * 16807) % 2147483647) / 2147483647;
const snap = y => Math.round(y / 6.2) * 6.2;
const bars = [];
let k = 0, prev = price[0][1];
for (let x = 82; x < 1853; x += 2.02) {
  while (k < price.length - 2 && price[k + 1][0] < x) k++;
  const [x0, y0] = price[k], [x1, y1] = price[k + 1];
  const base = y0 + (y1 - y0) * Math.min(1, Math.max(0, (x - x0) / (x1 - x0 || 1)));
  const close = snap(base + (rnd() - .5) * 24);
  const wick = () => rnd() < .3 && y0 > 130 ? 6 + rnd() * 10 : 0;
  bars.push({ x, open: prev, close, high: Math.max(118, Math.min(prev, close) - wick()), low: Math.max(prev, close) + wick() });
  prev = close;
}
const avg = (i, n) => {
  const part = bars.slice(Math.max(0, i - n + 1), i + 1);
  return part.reduce((s, b) => s + b.close, 0) / part.length;
};
const ribbon = { up: '', down: '' }, candle = { up: '', down: '' };
let slow = '';
bars.forEach((b, i) => {
  const s = avg(i, 8);
  slow += `${i ? 'L' : 'M'}${b.x.toFixed(1)} ${s.toFixed(1)}`;
  if (i) {
    const p = bars[i - 1], f0 = avg(i - 1, 4), f1 = avg(i, 4), s0 = avg(i - 1, 8);
    ribbon[f1 < s ? 'up' : 'down'] += `M${p.x} ${f0}L${b.x} ${f1}V${s}L${p.x} ${s0}Z`;
  }
  const x = Math.round(b.x) + .5, top = Math.round(Math.min(b.open, b.close)) + .5, bottom = Math.round(Math.max(b.open, b.close)) + .5;
  candle[b.close < b.open || (b.close === b.open && i % 2) ? 'up' : 'down'] += `M${x} ${b.high}V${top}h1V${bottom}h-2V${top}h1M${x} ${bottom}V${b.low}`;
});
el('path', { d: ribbon.up, fill: '#f00' });
el('path', { d: ribbon.down, fill: '#0000ff' });
el('path', { d: slow, fill: 'none', stroke: '#0000e0' });
el('path', { d: candle.up, fill: 'none', stroke: '#f01e10' });
el('path', { d: candle.down, fill: 'none', stroke: '#1060d0' });

/* signal arrows */
function arrow(at, color, dir) {
  const [[x, y]] = points(at);
  el('path', { d: `M${x} ${y + 5 * dir}l5 ${-5 * dir}h-3v${-4 * dir}h-4v${4 * dir}h-3z`, fill: color });
}
arrow('A 297,1065', '#dc0028', 1);
arrow('A 302,1143', '#0000ff', 1);
arrow('B 315,62', '#0000ff', 1);
arrow('B 202,425', '#00ff00', -1);
arrow('B 202,455', '#800080', -1);
arrow('B 435,465', '#00ee00', -1);
arrow('C 839,240', '#dc0028', 1);
arrow('C 1307,188', '#800080', -1);
arrow('C 1302,225', '#00ee00', -1);
area('E 813,430 828,430', 'E 817,560 819,560', '#ff3333');

/* lower pane */
const signal = points('F 200,470 240,390 280,320 308,258 318,250 340,280 370,325 400,355 430,387 460,385 480,350 520,315 555,287 590,295 620,345 680,415 750,475 790,500 850,503 920,480 960,478 1000,470 1040,435 1110,405 1160,413 1200,400 1240,350 1280,320 1320,310 1345,325 1380,365 1440,410 1500,455 1560,473 G 0,535 50,535 140,533 200,510 250,495 330,483 380,472 440,472 480,485 540,508 580,510 625,495 660,465 700,430 740,418 770,422 800,405 830,365 870,300 915,243 950,243 1000,270 1040,285 1080,278 1120,258 1170,210 1220,188 1250,182 1290,190 1370,186 1420,192 1480,225 1540,245 E 0,798 60,820 120,855 200,905 250,902 320,888 480,888 540,893 600,908 760,913 830,945 900,955 1010,950 1110,985 1200,995 1260,1003 1340,995 1405,990');
const obv = points('F 200,250 210,200 220,165 230,255 243,205 258,310 270,260 285,175 300,230 308,262 318,300 325,350 340,410 365,420 380,380 410,380 430,387 445,340 460,285 475,180 488,270 500,215 520,300 540,280 550,330 580,370 595,430 630,430 655,410 662,460 700,465 715,522 740,515 765,490 790,508 820,490 860,500 880,440 890,455 905,445 915,480 930,500 950,480 975,490 990,410 1000,370 1018,355 1030,370 1045,430 1070,442 1100,405 1115,390 1140,405 1160,375 1190,390 1200,340 1210,245 1228,252 1240,300 1255,285 1280,320 1290,355 1335,350 1350,425 1395,400 1410,440 1450,440 1480,490 1520,480 1560,473 G 0,525 15,520 30,540 60,542 90,528 140,520 155,500 170,500 185,480 220,487 250,492 275,475 300,485 335,465 350,445 370,468 410,472 415,488 450,490 470,512 530,515 580,495 590,472 620,470 630,400 638,350 645,405 665,435 680,405 700,430 725,430 745,410 770,420 782,340 790,350 805,290 820,265 835,205 845,225 860,215 870,245 880,228 900,250 910,235 920,270 960,262 980,312 1000,295 1025,285 1040,270 1055,235 1065,245 1075,208 1095,250 1120,245 1135,155 1147,190 1155,145 1165,150 1185,190 1220,185 1235,205 1290,200 1308,160 1345,185 1370,200 1390,225 1420,215 1460,250 1530,245 1550,270 E 0,840 20,820 55,850 90,860 103,905 130,890 165,920 205,903 240,878 300,882 370,888 430,880 480,888 530,905 600,915 640,908 740,915 765,955 805,960 818,998 835,945 860,940 900,955 950,950 1020,940 1040,1000 1100,1000 1120,985 1200,1000 1210,1020 1270,1000 1300,980 1340,990 1380,985 1405,998');
function at(pts, x) {
  let i = 0;
  while (i < pts.length - 2 && pts[i + 1][0] < x) i++;
  const t = (x - pts[i][0]) / (pts[i + 1][0] - pts[i][0]);
  return pts[i][1] + (pts[i + 1][1] - pts[i][1]) * t;
}
let above = '', below = '', edge = '';
for (let x = 82; x < 1853; x++) {
  const s = at(signal, x), o = at(obv, x) + (rnd() - .5) * 3;
  if (o < s) above += `M${x} ${s}V${o}h1.2V${s}z`;
  else { below += `M${x} ${s}V${o}h1.2V${s}z`; edge += `M${x} ${o}h1v1.500h-1z`; }
}
const volume = { up: '', down: '' };
const peaks = { 82:150, 84:44, 88:20, 92:30, 96:18, 101:27, 106:12, 118:38, 115:35, 122:22, 130:33, 139:24, 146:9, 180:12, 184:15, 188:36, 193:50, 197:35, 206:27, 212:18, 223:22, 232:13, 240:16, 252:12, 269:32, 289:12, 354:28, 359:12, 373:22, 394:15, 400:20, 408:28, 425:15, 474:12, 490:27, 494:36, 505:18, 525:17, 549:22, 604:14, 714:8, 778:15, 897:33, 902:30, 917:13, 943:19, 957:25, 963:15, 968:23, 973:17, 982:16, 995:12, 1015:16, 1035:21, 1070:14, 1077:17, 1103:30, 1111:20, 1118:10, 1173:10, 1227:8, 1273:10, 1321:10, 1348:9, 1378:8, 1453:4, 1479:7, 1500:5, 1592:6, 1614:13, 1700:10, 1772:12 };
bars.forEach((b, i) => {
  const x = Math.round(b.x);
  let h = 1 + rnd() * rnd() * (x < 240 ? 18 : x > 1100 ? 4 : 9);
  let peak = false;
  for (const p in peaks) if (Math.abs(p - x) <= 1) { h = Math.max(h, peaks[p]); peak = peaks[p] > 12; }
  volume[peak || b.close <= b.open ? 'up' : 'down'] += `M${x}.5 1037V${(1037 - h).toFixed(1)}h1.500V1037`;
});
el('path', { d: volume.down, fill: 'none', stroke: '#1060d0', 'stroke-width': .9 });
el('path', { d: above, fill: '#ff9900' });
el('path', { d: edge, fill: '#ff9900' });
el('path', { d: below, fill: '#0000ff' });
el('path', { d: volume.up, fill: 'none', stroke: '#f01e10', 'stroke-width': .9 });
el('path', { d: d(signal), fill: 'none', stroke: '#0000c0' });
line('F 120,471 200,471 320,415 440,400 560,352 640,342 705,341 740,365 830,405 960,430 1020,450 1100,461 1160,460 1220,445 1340,400 1470,387 1568,400 G 0,460 130,480 210,505 330,514 460,500 550,498 680,480 790,463 870,430 960,390 1060,342 1180,285 1260,245 1340,226 1440,220 1560,210 E 50,760 120,780 300,840 400,865 500,885 600,898 740,898 900,920 1020,933 1170,960 1290,975 1405,985', '#993300', 3);
level(1036.5, 49, 1853, '#f01e10', 1);
level(874.5, 49, 1867, '#888', 1);

/* cross-hair and right edge */
level(471.5, 49, 1863, '#f00', 1);
el('path', { d: 'M1332.5 77V1038', stroke: '#f00' });
rect(1862, 77, 1865, 843, '#e61e10');
rect(1862, 843, 1865, 873, '#1060d0');
el('path', { d: 'M1866.5 77V1038', stroke: '#888' });

/* text */
const pct = y => ((y - 77) / 961 * 100).toFixed(2) + '%';
function text(parent, content, cls, top, left, color) {
  const s = document.createElement('span');
  s.className = cls;
  s.innerHTML = content;
  if (top != null) s.style.top = pct(top);
  if (left != null) s.style.left = ((left - 49) / 1818 * 100).toFixed(2) + '%';
  if (color) s.style.color = color;
  document.getElementById(parent).appendChild(s);
}
[['42,850',117],['42,426',169],['42,003',222],['41,580',276],['41,157',330],['40,734',384],['40,311',441],['39,888',496],['39,465',552],['39,042',609],['38,619',668],['38,196',726],['37,773',784],['37,350',843]]
  .forEach(([t, y]) => text('left', t, 'label', y));
['00,000','50,000','00,000','50,000','00,000','50,000','00,000'].forEach((t, i) => {
  text('left', t, 'label lower', 897 + i * 20);
  text('left', '', 'tick', 897 + i * 20);
  text('left', '', 'tick minor', 887 + i * 20);
});
gridMain.forEach((y, i) => {
  text('right', (100 - i * 5) + ',00', 'label', y - 1);
  text('right', '', 'tick', y);
  [1, 2, 3, 4].forEach(n => text('right', '', 'tick minor', y + n * 9.9));
});
['250,000','200,000','150,000','100,000','50,000'].forEach((t, i) => {
  text('right', t, 'label', 885 + i * 30);
  text('right', '', 'tick', 886 + i * 30);
  [1, 2, 3, 4].forEach(n => text('right', '', 'tick minor', 886 + i * 30 + n * 6));
});
text('left', '7,23%', 'label', 485, null, '#f01e10');
text('right', '7,29%', 'label', 485, null, '#f01e10');
text('left', '40,074<em>+7,29%</em>', 'price-tag', 457);
text('right', '40,074<em>+7,29%</em>', 'price-tag', 457);
text('plot', '최고 42,850 (-6,53%, 09:44)', 'mark', 125, 1003, '#f00');
text('plot', '최저 37,350 (7,23%, 15:18)', 'mark', 835, 65, '#0000dc');
[['(고가+저가+종가)/3 가중 18: 40,088',122,'#ff6600'],['저가/지수 24: &nbsp; &nbsp; &nbsp; 4 &nbsp; &nbsp;',122,'#000'],['10: 40,098',134,'#00ccff'],['1080: 39,688',146,'#000'],['180: 39,888',146,'#000'],['15: 40,888',158,'#ffcc00'],['5: 40,068',158,'#f00'],['30: 40,098',170,'#cce6ff'],['10: 40,098',170,'#0000ff'],
 ['피봇2차저항선 42,150 (12,85%)',213,'#f00'],['피봇1차저항선 39,750 (6,43%)',521,'#ff00cc'],['당일시가 39,200 (4,95%)',601,'#00ff00'],['전일종가 37,350 (0,00%)',852,'#993300'],
 ['거래량: 1,644',920,'#339999'],['단순 3: 877',932,'#ffff00'],['54: 2,454',944,'#000'],['13: 1,240',956,'#00ff00'],['27: 2,210',968,'#ccffff'],['Signal 100: -426,709',978,'#993300'],['Signal 100: -426,709',990,'#ff9900'],['Signal 150: -413,740',1002,'#00ffff'],['OBV: -436,397',1014,'#ff9900'],['Signal 24: -430,360',1026,'#0000ff']]
  .forEach(([t, y, c]) => text('plot', t, 'mark edge', y, null, c));
['09:10','09:20','09:30','09:40','','10:00','10:10'].forEach((t, i) => t && text('times', t, 'time', null, gridX[i]));
text('times', '2024/06/20(목) 09:50:55', 'cursor-time', null, 1264);
```
